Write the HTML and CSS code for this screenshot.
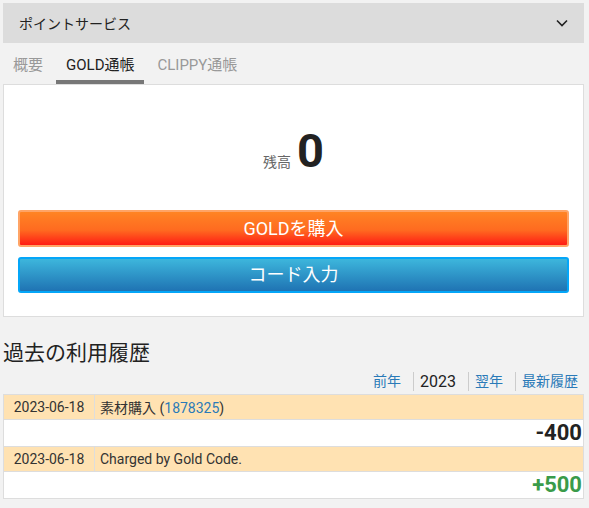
FILE: index.html
```html
<!DOCTYPE html>
<html lang="ja">
<head>
    <meta charset="utf-8"/>
    <title>ポイントサービス</title>
    <meta name="viewport" content="width=device-width, initial-scale=1.0"/>
    <link rel="stylesheet" href="styles.css">
</head>
<body>
<div class="panel-head">
    <span>ポイントサービス</span>
    <svg class="chev" width="12" height="8" viewBox="0 0 12 8"><path d="M1 1.5l5 5 5-5" fill="none" stroke="#222" stroke-width="1.6"/></svg>
</div>
<ul class="tabs">
    <li class="tab">概要</li>
    <li class="tab on">GOLD通帳</li>
    <li class="tab">CLIPPY通帳</li>
</ul>
<div class="card">
    <div class="balance">
        <span class="balance-label">残高</span>
        <span class="balance-num">0</span>
    </div>
    <a class="btn btn-buy">GOLDを購入</a>
    <a class="btn btn-code">コード入力</a>
</div>

<h2 class="hist-title">過去の利用履歴</h2>
<ul class="year-nav">
    <li><a>前年</a></li>
    <li class="cur">2023</li>
    <li><a>翌年</a></li>
    <li><a>最新履歴</a></li>
</ul>
<table class="hist">
    <tr class="hist-info">
        <td class="hist-date">2023-06-18</td>
        <td>素材購入 (<a>1878325</a>)</td>
    </tr>
    <tr>
        <td class="hist-amount" colspan="2">-400</td>
    </tr>
    <tr class="hist-info">
        <td class="hist-date">2023-06-18</td>
        <td>Charged by Gold Code.</td>
    </tr>
    <tr>
        <td class="hist-amount plus" colspan="2">+500</td>
    </tr>
</table>
</body>
</html>
```
FILE: styles.css
```css
* {
    padding: 0;
    margin: 0;
    list-style: none;
    box-sizing: border-box;
}
body {
    background: #f2f2f2;
    padding: 3px 5px 10px 3px;
    font-family: Roboto, "Noto Sans CJK JP", sans-serif;
    color: #222;
}
a { color: #2a7ab8; text-decoration: none; }

.panel-head {
    height: 40px;
    background: #dcdcdc;
    display: flex;
    align-items: center;
    justify-content: space-between;
    padding: 0 16px 0 16px;
    font-size: 14px;
}

.tabs {
    display: flex;
    gap: 3px;
    height: 41px;
}
.tab {
    display: flex;
    align-items: center;
    padding: 4px 10px 0;
    border-bottom: 4px solid transparent;
    font-size: 15px;
    color: #999;
}
.tab.on {
    color: #222;
    border-bottom-color: #777;
}

.card {
    background: #fff;
    border: 1px solid #ddd;
    padding: 0 14px 23px;
}
.balance {
    display: flex;
    justify-content: center;
    align-items: baseline;
    padding-top: 44px;
    height: 125px;
}
.balance-label {
    font-size: 14px;
    color: #666;
    margin-right: 6px;
}
.balance-num {
    font-size: 47px;
    line-height: 44px;
    font-weight: bold;
    color: #222;
}
.btn {
    display: block;
    height: 37px;
    border: 2px solid;
    border-radius: 3px;
    color: #fff;
    font-size: 18px;
    line-height: 33px;
    text-align: center;
}
.btn-buy {
    background: linear-gradient(#ff8424, #ff6a20 55%, #ff1c14);
    border-color: #ffa466;
}
.btn-code {
    margin-top: 10px;
    height: 36px;
    line-height: 32px;
    background: linear-gradient(#3db6dc, #1f73b3);
    border-color: #04a6f8;
}

.hist-title {
    margin-top: 22px;
    font-size: 21px;
    font-weight: normal;
    line-height: 28px;
    color: #222;
}
.year-nav {
    display: flex;
    justify-content: flex-end;
    align-items: center;
    margin-top: 5px;
    height: 19px;
    font-size: 14px;
    line-height: 19px;
}
.year-nav li {
    padding: 0 6px;
}
.year-nav li + li {
    margin-left: 6px;
    border-left: 1px solid #ccc;
}
.year-nav .cur {
    color: #222;
    font-size: 16px;
}

.hist {
    width: 100%;
    margin-top: 3px;
    border-collapse: collapse;
    border: 1px solid #ddd;
    font-size: 14px;
    color: #333;
}
.hist td {
    border-top: 1px solid #ddd;
}
.hist-info td {
    background: #ffe2b2;
    height: 25px;
    padding: 0 5px;
}
.hist-info .hist-date {
    width: 91px;
    text-align: center;
    border-right: 1px solid #ddd;
}
.hist-amount {
    height: 27px;
    text-align: right;
    background: #fff;
    font-size: 22px;
    font-weight: bold;
    line-height: 26px;
    padding: 0 1px 0 0;
    color: #222;
}
.hist-amount.plus { color: #3a9b4a; }
```
